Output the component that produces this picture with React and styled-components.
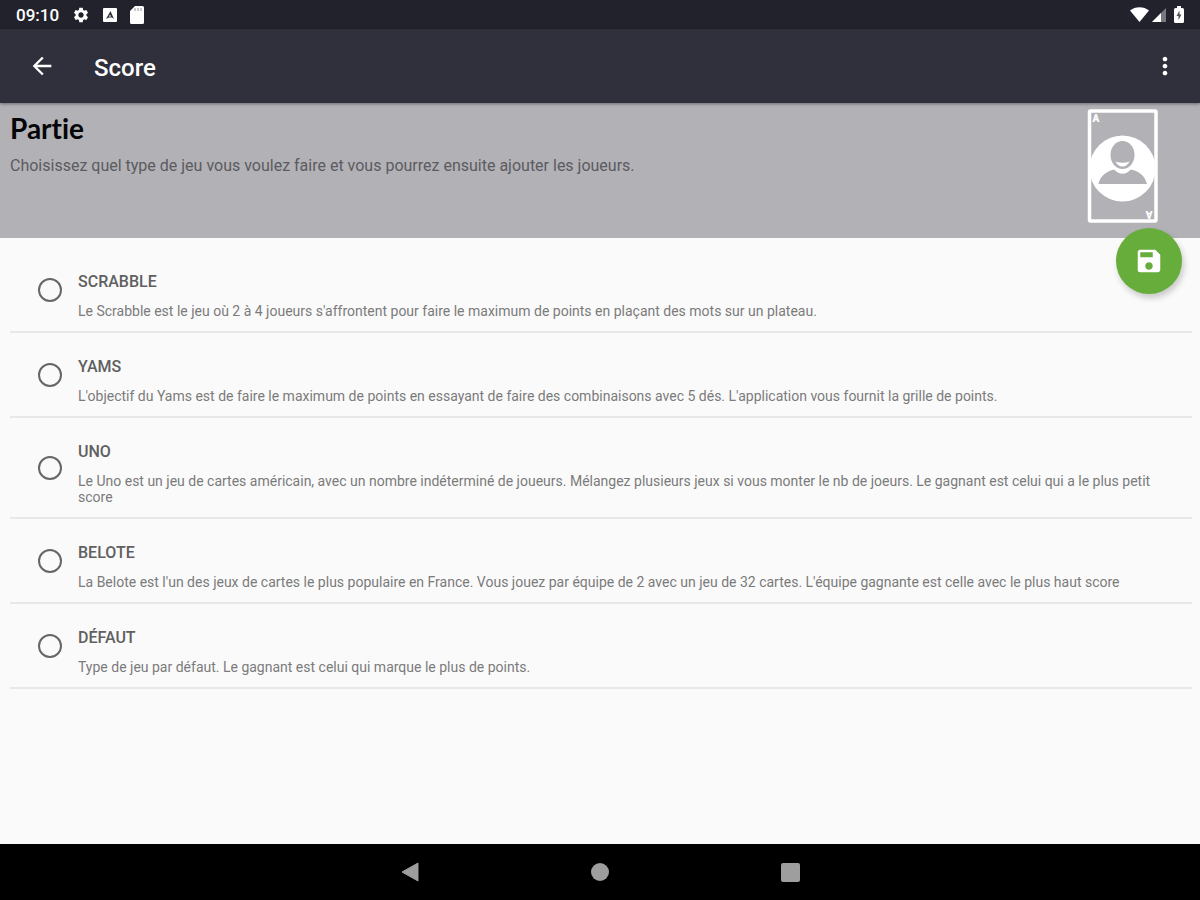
import React, { useState } from 'react';
import styled, { createGlobalStyle } from 'styled-components';
import { MdSettings, MdArrowBack, MdMoreVert, MdSave } from 'react-icons/md';

const GlobalStyle = createGlobalStyle`
  * {
    box-sizing: border-box;
  }

  body {
    margin: 0;
    background: #fafafa;
    font-family: Roboto, 'Liberation Sans', sans-serif;
  }
`;

const Screen = styled.div`
  display: flex;
  flex-direction: column;
  min-height: 100vh;
`;

const StatusBar = styled.div`
  display: flex;
  justify-content: space-between;
  height: 29px;
  padding: 0 16px;
  background: #22222d;
  color: #fff;
`;

const StatusGroup = styled.div`
  display: flex;
  align-items: center;
  gap: ${props => props.$gap};
`;

const Clock = styled.time`
  font-size: 17px;
  font-weight: 500;
`;

const AppBar = styled.header`
  position: relative;
  z-index: 1;
  display: flex;
  align-items: center;
  height: 74px;
  padding: 0 21px 0 28px;
  background: #30303d;
  color: #fff;
  box-shadow: 0 1px 3px rgba(0, 0, 0, 0.4);
`;

const IconButton = styled.button`
  display: flex;
  align-items: center;
  justify-content: center;
  width: 28px;
  height: 48px;
  padding: 0;
  border: 0;
  background: none;
  color: #fff;
  cursor: pointer;
`;

const AppTitle = styled.h1`
  flex: 1;
  margin: 0 0 0 38px;
  padding-top: 4px;
  font-size: 24px;
  font-weight: 500;
  line-height: 32px;
`;

const Banner = styled.section`
  position: relative;
  display: flex;
  justify-content: space-between;
  min-height: 135px;
  padding: 6px 42px 14px 10px;
  background: #b2b1b6;
`;

const BannerTitle = styled.h2`
  margin: 0;
  color: #050507;
  font-family: Lato, sans-serif;
  font-size: 28px;
  font-weight: 700;
  font-variant-ligatures: none;
  line-height: 38px;
`;

const BannerText = styled.p`
  margin: 9px 0 0;
  color: #5b5b60;
  font-size: 16px;
  line-height: 20px;
`;

const SaveButton = styled.button`
  position: absolute;
  right: 18px;
  bottom: -56px;
  display: flex;
  align-items: center;
  justify-content: center;
  width: 66px;
  height: 66px;
  padding: 0;
  border: 0;
  border-radius: 50%;
  background: #66ad3b;
  color: #fff;
  box-shadow: 2px 4px 6px rgba(0, 0, 0, 0.2);
  cursor: pointer;
`;

const GameList = styled.main`
  flex: 1;
  padding: 10px 8px 10px 10px;
`;

const GameRow = styled.label`
  display: flex;
  align-items: center;
  gap: 16px;
  padding: 24px 16px 12px 28px;
  border-bottom: 2px solid #e8e8e8;
  cursor: pointer;
`;

const Radio = styled.input`
  flex: none;
  width: 24px;
  height: 24px;
  margin: 0 0 12px;
  border: 2px solid #666;
  border-radius: 50%;
  appearance: none;

  &:checked {
    background: radial-gradient(#66ad3b 50%, transparent 55%);
  }
`;

const GameName = styled.div`
  color: #606060;
  font-size: 16px;
  font-weight: 500;
  line-height: 20px;
`;

const GameText = styled.div`
  margin-top: 11px;
  color: #7b7b7b;
  font-size: 14px;
  line-height: 16px;
`;

const NavBar = styled.nav`
  display: flex;
  align-items: center;
  justify-content: center;
  gap: 162px;
  height: 56px;
  background: #000;
`;

const CardLetter = styled.text`
  fill: #fff;
  font-size: 10px;
  font-weight: 900;
  text-anchor: middle;
`;

const KeyboardBadge = () => (
  <svg width='14' height='14' viewBox='0 0 14 14' aria-hidden='true'>
    <rect width='14' height='14' rx='1' fill='#fff' />
    <path d='M3 11 7.5 3 11 11 9 9.5H6Z' fill='#33333d' />
    <path d='M6 8h2' stroke='#fff' />
  </svg>
);

const SdCard = () => (
  <svg width='14' height='18' viewBox='0 0 14 18' aria-hidden='true'>
    <path d='M5 0h7.5A1.5 1.5 0 0 1 14 1.5v15a1.5 1.5 0 0 1-1.5 1.5h-11A1.5 1.5 0 0 1 0 16.5V5Z' fill='#fff' />
    <path d='M5 2v3M8 2v3M11 2v3' stroke='#b8b8bd' strokeWidth='1.5' />
  </svg>
);

const Wifi = () => (
  <svg width='19' height='15' viewBox='0 0 19 15' aria-hidden='true'>
    <path d='M0 3.5C5-1 14-1 19 3.5L9.5 15Z' fill='#fff' />
  </svg>
);

const Signal = () => (
  <svg width='14' height='14' viewBox='0 0 14 14' aria-hidden='true'>
    <path d='M14 0v14H0Z' fill='#77777f' />
    <path d='M9 5v9H0Z' fill='#fff' />
  </svg>
);

const Battery = () => (
  <svg width='10' height='17' viewBox='0 0 10 17' aria-hidden='true'>
    <path d='M3 0h4v2h1.5A1.5 1.5 0 0 1 10 3.5v12A1.5 1.5 0 0 1 8.5 17h-7A1.5 1.5 0 0 1 0 15.5v-12A1.5 1.5 0 0 1 1.5 2H3Z' fill='#fff' />
    <path d='M5.5 4.5 2.5 10h2v4L7.5 8.5h-2Z' fill='#50505a' />
  </svg>
);

const PlayerCard = () => (
  <svg width='71' height='115' viewBox='0 0 71 115' aria-hidden='true'>
    <rect x='2.5' y='2' width='66.5' height='110' rx='1' fill='none' stroke='#fff' strokeWidth='3.5' />
    <circle cx='35.5' cy='59.5' r='33' fill='#fff' />
    <path d='M11.5 75C13 67 20 62 27 60.5Q35.5 69 44 60.5C52 62 58 67 60 75Z' fill='#b2b1b6' />
    <ellipse cx='35.5' cy='46' rx='12' ry='14' fill='#b2b1b6' />
    <path d='M28.5 52.5Q35.5 55 42.5 52.5Q40 57.5 35.5 57.5T28.5 52.5Z' fill='#fff' />
    <CardLetter x='9' y='13'>A</CardLetter>
    <CardLetter x='9' y='13' transform='rotate(180 35.5 57.5)'>A</CardLetter>
  </svg>
);

const games = [
  {
    id: 'scrabble',
    name: 'SCRABBLE',
    text: 'Le Scrabble est le jeu où 2 à 4 joueurs s\'affrontent pour faire le maximum de points en plaçant des mots sur un plateau.'
  },
  {
    id: 'yams',
    name: 'YAMS',
    text: 'L\'objectif du Yams est de faire le maximum de points en essayant de faire des combinaisons avec 5 dés. L\'application vous fournit la grille de points.'
  },
  {
    id: 'uno',
    name: 'UNO',
    text: 'Le Uno est un jeu de cartes américain, avec un nombre indéterminé de joueurs. Mélangez plusieurs jeux si vous monter le nb de joeurs. Le gagnant est celui qui a le plus petit score'
  },
  {
    id: 'belote',
    name: 'BELOTE',
    text: 'La Belote est l\'un des jeux de cartes le plus populaire en France. Vous jouez par équipe de 2 avec un jeu de 32 cartes. L\'équipe gagnante est celle avec le plus haut score'
  },
  {
    id: 'defaut',
    name: 'DÉFAUT',
    text: 'Type de jeu par défaut. Le gagnant est celui qui marque le plus de points.'
  }
];

const App = () => {
  const [selected, setSelected] = useState(null);

  return (
    <Screen>
      <GlobalStyle />
      <StatusBar>
        <StatusGroup $gap='13px'>
          <Clock>09:10</Clock>
          <MdSettings size={18} />
          <KeyboardBadge />
          <SdCard />
        </StatusGroup>
        <StatusGroup $gap='8px'>
          <StatusGroup $gap='3px'>
            <Wifi />
            <Signal />
          </StatusGroup>
          <Battery />
        </StatusGroup>
      </StatusBar>
      <AppBar>
        <IconButton aria-label='Retour'><MdArrowBack size={28} /></IconButton>
        <AppTitle>Score</AppTitle>
        <IconButton aria-label="Plus d'options"><MdMoreVert size={28} /></IconButton>
      </AppBar>
      <Banner>
        <div>
          <BannerTitle>Partie</BannerTitle>
          <BannerText>Choisissez quel type de jeu vous voulez faire et vous pourrez ensuite ajouter les joueurs.</BannerText>
        </div>
        <PlayerCard />
        <SaveButton aria-label='Enregistrer'><MdSave size={30} /></SaveButton>
      </Banner>
      <GameList>
        {games.map(game => (
          <GameRow key={game.id}>
            <Radio
              type='radio'
              name='game'
              value={game.id}
              checked={selected === game.id}
              onChange={() => setSelected(game.id)} />
            <div>
              <GameName>{game.name}</GameName>
              <GameText>{game.text}</GameText>
            </div>
          </GameRow>
        ))}
      </GameList>
      <NavBar>
        <IconButton aria-label='Précédent'>
          <svg width='18' height='20' viewBox='0 0 18 20'>
            <path d='M17 1v18L1 10Z' fill='#9e9e9e' stroke='#9e9e9e' strokeLinejoin='round' />
          </svg>
        </IconButton>
        <IconButton aria-label='Accueil'>
          <svg width='18' height='18' viewBox='0 0 18 18'>
            <circle cx='9' cy='9' r='9' fill='#9e9e9e' />
          </svg>
        </IconButton>
        <IconButton aria-label='Applications récentes'>
          <svg width='19' height='19' viewBox='0 0 19 19'>
            <rect width='19' height='19' rx='2' fill='#9e9e9e' />
          </svg>
        </IconButton>
      </NavBar>
    </Screen>
  );
};

export default App;
